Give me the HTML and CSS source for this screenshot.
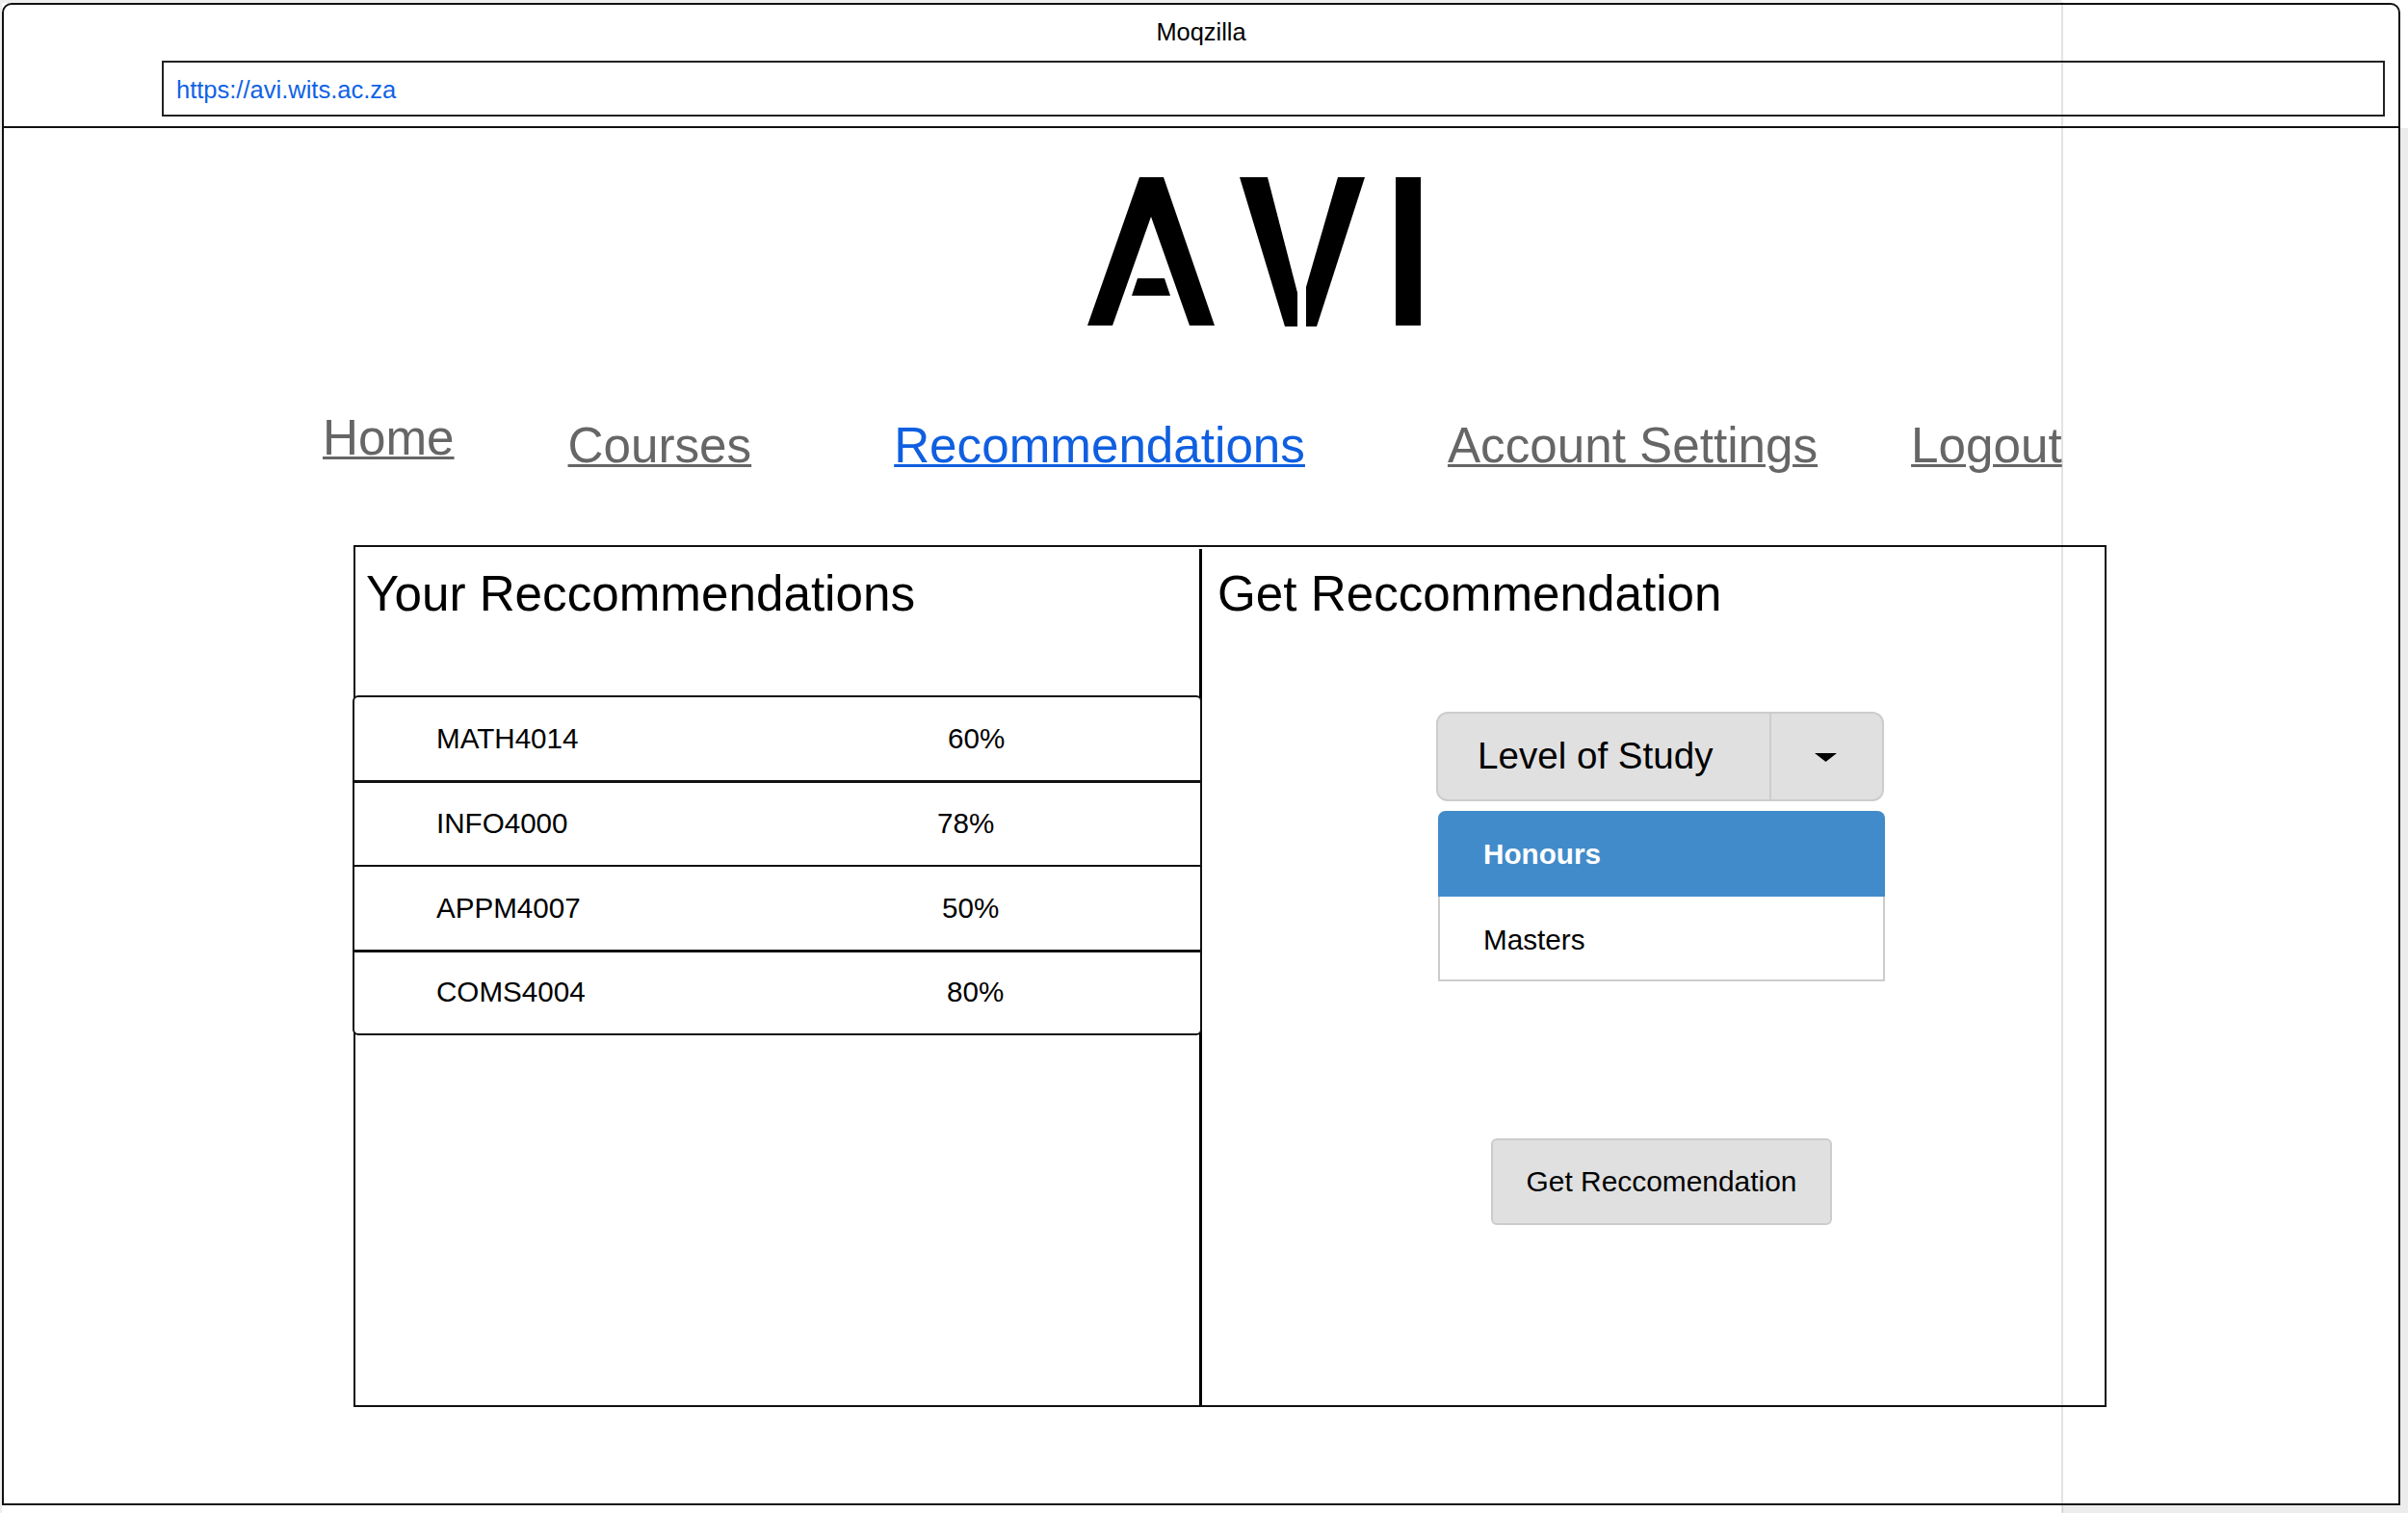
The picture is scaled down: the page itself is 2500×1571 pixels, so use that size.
FILE: index.html
```html
<!DOCTYPE HTML>
<html lang="en-US">
<head>
	<meta charset="UTF-8">
	<title>Moqzilla</title>
	<link rel="stylesheet" href="styles.css">
</head>
<body>
	<div class="shade-top"></div>
	<div class="shade-right"></div>
	<div class="shade-left"></div>

	<div class="window">
		<div class="browser-bar">
			<div class="browser-title">Moqzilla</div>
			<div class="address">https://avi.wits.ac.za</div>
		</div>

		<svg class="logo" viewBox="0 0 346 156" width="346" height="156" role="img" aria-label="AVI">
			<polygon points="54,0 79,0 132,154 106,154 66,41 26,154 0,154"/>
			<polygon points="52,105 80,105 86,123 46,123"/>
			<polygon points="158,0 187,0 218,120 218,155 205,155"/>
			<polygon points="260,0 288,0 238,155 227,155 227,114"/>
			<rect x="320" y="0" width="26" height="154"/>
		</svg>

		<ul class="nav">
			<li class="nav-home"><a>Home</a></li>
			<li class="nav-courses"><a>Courses</a></li>
			<li class="nav-recs"><a class="actual">Recommendations</a></li>
			<li class="nav-account"><a>Account Settings</a></li>
			<li class="nav-logout"><a>Logout</a></li>
		</ul>

		<div class="panel">
			<div class="col-left">
				<h2 class="panel-title">Your Reccommendations</h2>
				<div class="rec-list">
					<div class="rec-row"><span class="code">MATH4014</span><span class="pct">60%</span></div>
					<div class="rec-row"><span class="code">INFO4000</span><span class="pct pct-78">78%</span></div>
					<div class="rec-row"><span class="code">APPM4007</span><span class="pct pct-50">50%</span></div>
					<div class="rec-row"><span class="code">COMS4004</span><span class="pct pct-80">80%</span></div>
				</div>
			</div>
			<div class="col-right">
				<h2 class="panel-title title-get">Get Reccommendation</h2>
				<div class="dropdown">
					<span class="dropdown-label">Level of Study</span>
					<span class="dropdown-toggle">
						<svg class="caret" viewBox="0 0 23 9" width="23" height="9"><polygon points="0,0 23,0 11.5,9"/></svg>
					</span>
				</div>
				<ul class="menu">
					<li class="menu-item selected">Honours</li>
					<li class="menu-item">Masters</li>
				</ul>
				<div class="get-btn">Get Reccomendation</div>
			</div>
		</div>
	</div>

	<div class="guide"></div>
</body>
</html>
```

FILE: styles.css
```css
* {
box-sizing: border-box;
}

html, body {
margin: 0;
height: 1571px;
overflow: hidden;
}

body {
position: relative;
padding: 3px 8px 8px 2px;
background: #fff;
font-family: "Liberation Sans", Arial, sans-serif;
color: #000;
}

/* bandas grises alrededor de la ventana */
.shade-top {
position: absolute;
left: 0;
top: 0;
width: 2140px;
height: 3px;
background: #eee;
}
.shade-right {
position: absolute;
right: 0;
top: 133px;
width: 359px;
bottom: 0;
background: #ececec;
}
.shade-left {
position: absolute;
left: 0;
top: 3px;
width: 2px;
bottom: 0;
background: #eee;
}
.guide {
position: absolute;
left: 2140px;
top: 2px;
bottom: 0;
width: 2px;
background: rgba(0, 0, 0, 0.11);
}

/* ventana */
.window {
position: relative;
height: 1560px;
border: 2px solid #111;
border-radius: 10px 10px 0 0;
background: #fff;
}

.browser-bar {
height: 128px;
border-bottom: 2px solid #111;
}
.browser-title {
height: 56px;
margin-bottom: 2px;
line-height: 56px;
font-size: 25.4px;
text-align: center;
}
.address {
height: 58px;
margin-left: 164px;
margin-right: 14px;
padding-left: 13px;
border: 2px solid #222;
line-height: 56px;
font-size: 25.5px;
color: #0f62e6;
}

.logo {
display: block;
margin: 51px 0 0 1125px;
fill: #000;
}

/* menu */
.nav {
display: flex;
align-items: flex-start;
margin: 0;
padding: 93px 0 0 331px;
list-style: none;
height: 226px;
font-size: 51.2px;
line-height: 60px;
}
.nav a {
color: #666;
text-decoration: underline;
text-decoration-thickness: 3px;
}
.nav a.actual {
color: #0f5fe0;
}
.nav-home {
margin-top: -8px;
}
.nav-courses {
margin-left: 118px;
}
.nav-recs {
margin-left: 148px;
}
.nav-account {
margin-left: 148px;
}
.nav-logout {
margin-left: 97px;
}

/* panel principal */
.panel {
display: flex;
width: 1820px;
height: 895px;
margin-left: 363px;
border: 2px solid #111;
}
.col-left {
width: 879px;
margin-top: 2px;
border-right: 3px solid #000;
}
.col-right {
flex: 1;
}
.panel-title {
margin: 0;
height: 152px;
padding: 17px 0 0 11px;
font-size: 51.2px;
font-weight: normal;
line-height: 60px;
}
.title-get {
height: 154px;
padding: 19px 0 0 16px;
}

.rec-list {
margin: 0 -3px 0 -3px;
}
.rec-row {
display: flex;
align-items: center;
height: 90px;
margin-top: -2px;
padding-left: 85px;
border: 2px solid #111;
font-size: 29.6px;
background: #fff;
}
.rec-row:first-child {
margin-top: 0;
border-radius: 6px 6px 0 0;
}
.rec-row:last-child {
height: 89px;
border-radius: 0 0 6px 6px;
}
/* el primero y el tercero llevan una linea mas gruesa debajo */
.rec-row:nth-child(2), .rec-row:nth-child(4) {
border-top-width: 3px;
padding-bottom: 2px;
}
.code {
width: 531px;
}
.pct-78 {
margin-left: -11px;
}
.pct-50 {
margin-left: -6px;
}
.pct-80 {
margin-left: -1px;
}

/* desplegable */
.dropdown {
display: flex;
width: 465px;
height: 93px;
margin: 17px 0 0 243px;
border: 2px solid #ccc;
border-radius: 12px;
background: #e0e0e0;
}
.dropdown-label {
width: 346px;
padding-left: 41px;
border-right: 2px solid #ccc;
font-size: 38.6px;
line-height: 87px;
}
.dropdown-toggle {
flex: 1;
display: flex;
align-items: center;
justify-content: center;
}
.caret {
fill: #000;
margin-top: 2px;
margin-right: 2px;
}

.menu {
width: 464px;
height: 177px;
margin: 10px 0 0 245px;
padding: 0;
list-style: none;
border: 2px solid #ccc;
border-top: 0;
border-radius: 8px 8px 0 0;
font-size: 29.7px;
}
.menu-item {
height: 88px;
padding-left: 45px;
line-height: 90px;
}
.menu-item.selected {
height: 89px;
margin: 0 -2px;
padding-left: 47px;
border-radius: 8px 8px 0 0;
background: #428bca;
color: #fff;
font-weight: bold;
}

.get-btn {
width: 354px;
height: 90px;
margin: 163px 0 0 300px;
border: 2px solid #ccc;
border-radius: 6px;
background: #e0e0e0;
font-size: 29.9px;
line-height: 86px;
text-align: center;
}
```
